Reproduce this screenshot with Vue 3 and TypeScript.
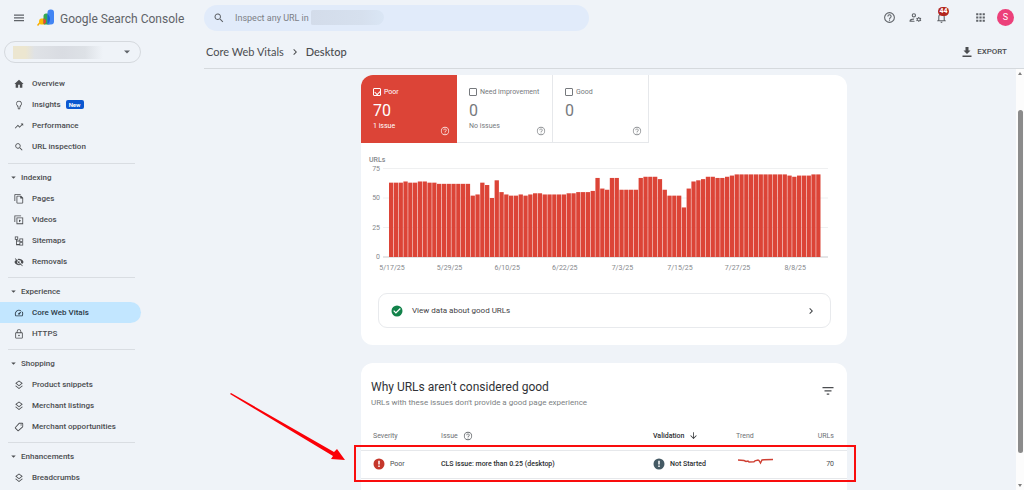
<script setup lang="ts">
import { ref } from 'vue'

interface NavItem {
  label: string
  icon: string
  isNew?: boolean
  active?: boolean
}
interface NavGroup {
  title?: string
  items: NavItem[]
}

const groups: NavGroup[] = [
  {
    items: [
      { label: 'Overview', icon: 'home' },
      { label: 'Insights', icon: 'bulb', isNew: true },
      { label: 'Performance', icon: 'trend' },
      { label: 'URL inspection', icon: 'search' },
    ],
  },
  {
    title: 'Indexing',
    items: [
      { label: 'Pages', icon: 'pages' },
      { label: 'Videos', icon: 'videos' },
      { label: 'Sitemaps', icon: 'sitemap' },
      { label: 'Removals', icon: 'hidden' },
    ],
  },
  {
    title: 'Experience',
    items: [
      { label: 'Core Web Vitals', icon: 'speed', active: true },
      { label: 'HTTPS', icon: 'lock' },
    ],
  },
  {
    title: 'Shopping',
    items: [
      { label: 'Product snippets', icon: 'layers' },
      { label: 'Merchant listings', icon: 'layers' },
      { label: 'Merchant opportunities', icon: 'tag' },
    ],
  },
  { title: 'Enhancements', items: [{ label: 'Breadcrumbs', icon: 'layers' }] },
]

const icons: Record<string, string> = {
  home: 'M10 21v-7h4v7h6v-9h3L12 2 1 12h3v9z',
  bulb: 'M9 21c0 .6.4 1 1 1h4c.6 0 1-.4 1-1v-1H9v1zm3-19a7 7 0 0 0-4 12.7V17c0 .6.4 1 1 1h6c.6 0 1-.4 1-1v-2.300A7 7 0 0 0 12 2zm2.800 11.100-.8.6V16h-4v-2.300l-.8-.6A5 5 0 1 1 14.800 13.100z',
  trend: 'm16 6 2.300 2.300-4.900 4.900-4-4L2 16.600 3.400 18l6-6 4 4 6.300-6.300L22 12V6z',
  search: 'M15.500 14h-.8l-.3-.3A6.500 6.500 0 1 0 13.700 14.400l.3.3v.8l5 5 1.500-1.500-5-5zm-6 0a4.500 4.500 0 1 1 0-9 4.500 4.500 0 0 1 0 9z',
  pages: 'M16 0H3C1.900 0 1 .9 1 2v15h2V2h13V0zm1 4H8C6.900 4 6 4.900 6 6v15c0 1.100.9 2 2 2h12c1.100 0 2-.9 2-2V9l-5-5zM8 21V6h7v5h5v10H8z',
  videos: 'M6 6v16h16V6H6zm2 2h12v12H8V8zm4 2.500v7l5-3.500zM1 1h2v16H1zM3 1h14v2H3z',
  sitemap: 'M2 1v8h3v13h8v1h9v-8h-9v4H7V13h6v1h9V6h-9v5H7V9h3V1H2zm2 2h4v4H4V3zm11 5h5v4h-5V8zm0 9h5v4h-5v-4z',
  hidden: 'M12 7a5 5 0 0 1 4.700 6.800l2.900 2.900A12 12 0 0 0 23 12a11.800 11.800 0 0 0-15-7l2.200 2.200A5 5 0 0 1 12 7zM2 4.300l2.700 2.700A11.800 11.800 0 0 0 1 12a11.800 11.800 0 0 0 15.400 6.700L19.700 22l1.300-1.300L3.300 3 2 4.300zM7.500 9.800l1.600 1.600a3 3 0 0 0 3.500 3.500l1.600 1.600A5 5 0 0 1 7.500 9.800zM11.800 9l3.200 3.200V12a3 3 0 0 0-3.200-3z',
  speed: 'm20.400 8.600-1.300 1.900A8 8 0 0 1 18.900 18H5.100A8 8 0 0 1 15.400 6.900l1.900-1.300A10 10 0 0 0 3.400 19c.3.600 1 1 1.700 1h13.800c.7 0 1.400-.4 1.700-1a10 10 0 0 0-.2-10.400zM10.600 15.400a2 2 0 0 0 2.800 0L19 7l-8.400 5.600a2 2 0 0 0 0 2.800z',
  lock: 'M19 8h-1.500V6a5.500 5.500 0 0 0-11 0v2H5c-1.100 0-2 .9-2 2v11c0 1.100.9 2 2 2h14c1.100 0 2-.9 2-2V10c0-1.100-.9-2-2-2zM8.500 6a3.500 3.500 0 0 1 7 0v2h-7V6zM19 21H5V10h14v11zm-7-3.500a2 2 0 1 0 0-4 2 2 0 0 0 0 4z',
  layers: 'M12 1 3 8l9 7 9-7-9-7zm0 2.600L17.700 8 12 12.400 6.300 8 12 3.600zM4.600 13.200 3 14.500l9 7 9-7-1.600-1.300L12 19l-7.400-5.800z',
  tag: 'M20 2h-7c-.6 0-1.100.2-1.500.6l-9 10a2 2 0 0 0 .1 2.800l6 6a2 2 0 0 0 2.800.1l10-9c.4-.4.6-.9.6-1.500V4c0-1.100-.9-2-2-2zm0 9-10 9-6-6 9-10h7v7zM17 5.500a1.500 1.500 0 1 0 0 3 1.500 1.500 0 0 0 0-3z',
  help: 'M11 18h2v-2h-2v2zm1-16a10 10 0 1 0 0 20 10 10 0 0 0 0-20zm0 18a8 8 0 1 1 0-16 8 8 0 0 1 0 16zm0-14a4 4 0 0 0-4 4h2a2 2 0 1 1 4 0c0 2-3 1.800-3 5h2c0-2.300 3-2.500 3-5a4 4 0 0 0-4-4z',
  people: 'M9 12a4 4 0 1 0 0-8 4 4 0 0 0 0 8zm0-6a2 2 0 1 1 0 4 2 2 0 0 1 0-4zM3 18c.2-.7 3-2 6-2l.7-2C6 13.700 1 15.300 1 18v2h9.500l-.9-2H3zm18.700-2-.1-1 1.100-1-1-1.700-1.500.5-.9-.5L19 11h-2l-.3 1.300-.9.5-1.500-.5-1 1.700 1.100 1v1l-1.100 1 1 1.700 1.500-.5.9.5L17 20h2l.3-1.300.9-.5 1.500.5 1-1.700-1-1zM18 17.300a1.800 1.800 0 1 1 0-3.600 1.800 1.800 0 0 1 0 3.600z',
  bell: 'M12 22a2 2 0 0 0 2-2h-4c0 1.100.9 2 2 2zm6-6v-5c0-3.100-1.600-5.600-4.500-6.300V4a1.500 1.500 0 0 0-3 0v.7C7.600 5.400 6 7.900 6 11v5l-2 2v1h16v-1l-2-2zm-2 1H8v-6c0-2.500 1.500-4.500 4-4.500s4 2 4 4.500v6z',
  apps: 'M4 4h4v4H4zm6 0h4v4h-4zm6 0h4v4h-4zM4 10h4v4H4zm6 0h4v4h-4zm6 0h4v4h-4zM4 16h4v4H4zm6 0h4v4h-4zm6 0h4v4h-4z',
  menu: 'M2 5h20v2.500H2zm0 5.500h20V13H2zM2 16h20v2.500H2z',
  download: 'M19 9h-4V2H9v7H5l7 7 7-7zM3 19v3h18v-3z',
  chevron: 'M8.600 16.600 13.200 12 8.600 7.400 10 6l6 6-6 6z',
  caret: 'M6 9h12l-6 6z',
  arrowDown: 'M11 3v14l-6-6-1.500 1.500L12 21l8.500-8.500L19 11l-6 6V3z',
  filter: 'M1 4h22v2.500H1zM5 10.500h14V13H5zM9.500 17h5v2.500h-5z',
  check: 'M12 1a11 11 0 1 0 0 22 11 11 0 0 0 0-22zm-2.200 16.500L4.500 12.200l1.700-1.700 3.600 3.600 8-8 1.700 1.700z',
  alert: 'M12 1a11 11 0 1 0 0 22 11 11 0 0 0 0-22zm1.500 17h-3v-3h3zm0-5h-3V5.500h3z',
}

const tabs = ref([
  { id: 'poor', label: 'Poor', count: 70, note: '1 issue', on: true },
  { id: 'need', label: 'Need improvement', count: 0, note: 'No issues', on: false },
  { id: 'good', label: 'Good', count: 0, note: '', on: false },
])

const values = [
  63, 63, 63, 64, 63, 63, 64, 64, 63, 63, 62, 62, 62, 62, 62, 62, 62, 52, 53, 63,
  61, 50, 65, 55, 53, 52, 52, 53, 52, 53, 54, 54, 53, 53, 53, 53, 53, 54, 54, 55,
  55, 55, 56, 67, 58, 57, 67, 67, 57, 57, 57, 57, 67, 68, 68, 68, 66, 57, 52, 52,
  52, 42, 58, 64, 65, 66, 68, 68, 67, 67, 68, 69, 70, 70, 70, 70, 70, 70, 70, 70,
  70, 70, 70, 69, 68, 69, 69, 69, 70, 70,
]
const dates = ['5/17/25', '5/29/25', '6/10/25', '6/22/25', '7/3/25', '7/15/25', '7/27/25', '8/8/25']
const ticks = [75, 50, 25, 0]

const base = 114
const step = 4.8
const yOf = (v: number): number => base - v * 1.18
const query = ref('')
</script>

<template>
  <div class="page">
    <header class="top">
      <div class="brand">
        <button class="plain" aria-label="Menu">
          <svg class="i12" viewBox="0 0 24 24"><path :d="icons.menu" /></svg>
        </button>
        <svg class="logo" viewBox="0 0 34 34" aria-hidden="true">
          <path d="M1 33l5-6" stroke="#f9ab00" stroke-width="3" />
          <path d="M4 25c0-4 2-6 5-6h7v12H8c-3 0-4-2-4-6z" fill="#fbbc04" />
          <path d="M13 14c0-3 2-5 5-5h7v22H16c-2 0-3-1-3-3z" fill="#34a853" />
          <path d="M13 19c3 0 5 3 5 6s-2 5-5 5z" fill="#ea4335" />
          <path d="M21 7c0-4 2-6 6-6h1c4 0 6 2 6 6v18c0 4-2 6-6 6h-7z" fill="#4285f4" />
          <path d="M21 10c3 2 5 6 5 10s-2 8-5 11z" fill="#1967d2" />
        </svg>
        <span class="name">Google Search Console</span>
      </div>
      <label class="search">
        <svg class="i12" viewBox="0 0 24 24"><path :d="icons.search" /></svg>
        <input v-model="query" type="text" placeholder="Inspect any URL in" aria-label="Inspect any URL" />
        <span class="smudge"></span>
      </label>
      <div class="tools">
        <button class="plain" aria-label="Help"><svg class="i13" viewBox="0 0 24 24"><path :d="icons.help" /></svg></button>
        <button class="plain" aria-label="Users"><svg class="i13" viewBox="0 0 24 24"><path :d="icons.people" /></svg></button>
        <button class="plain bell" aria-label="Notifications">
          <svg class="i13" viewBox="0 0 24 24"><path :d="icons.bell" /></svg>
          <span class="count">44</span>
        </button>
        <button class="plain apps" aria-label="Apps"><svg class="i13" viewBox="0 0 24 24"><path :d="icons.apps" /></svg></button>
        <button class="avatar">S</button>
      </div>
    </header>

    <aside class="side">
      <button class="site" aria-label="Select property">
        <span class="site-name"></span>
        <svg class="i12" viewBox="0 0 24 24"><path :d="icons.caret" /></svg>
      </button>
      <nav>
        <section v-for="(g, gi) in groups" :key="gi" class="group">
          <button v-if="g.title" class="group-title">
            <svg class="i9" viewBox="0 0 24 24"><path :d="icons.caret" /></svg>{{ g.title }}
          </button>
          <a v-for="n in g.items" :key="n.label" href="#" class="item" :class="{ active: n.active }">
            <svg class="i10" viewBox="0 0 24 24"><path :d="icons[n.icon]" fill-rule="evenodd" /></svg>
            <span>{{ n.label }}</span>
            <span v-if="n.isNew" class="new">New</span>
          </a>
        </section>
      </nav>
    </aside>

    <main class="main">
      <div class="bar">
        <nav class="crumbs">
          <a href="#">Core Web Vitals</a>
          <svg class="i12" viewBox="0 0 24 24"><path :d="icons.chevron" /></svg>
          <strong>Desktop</strong>
        </nav>
        <button class="plain export">
          <svg class="i12" viewBox="0 0 24 24"><path :d="icons.download" /></svg>EXPORT
        </button>
      </div>
      <div class="scroll">
        <div class="content">
          <section class="card">
            <div class="tabs">
              <div v-for="t in tabs" :key="t.id" class="tab" :class="{ on: t.id === 'poor' }">
                <label><input v-model="t.on" type="checkbox" />{{ t.label }}</label>
                <div class="num">{{ t.count }}</div>
                <div class="note">{{ t.note }}</div>
                <svg class="i10 tab-help" viewBox="0 0 24 24"><path :d="icons.help" /></svg>
              </div>
            </div>
            <svg class="chart" viewBox="0 0 486 140" role="img" aria-label="Poor URLs by day">
              <text x="8" y="19" class="axis-title">URLs</text>
              <g v-for="t in ticks" :key="t">
                <line x1="22" x2="467" :y1="yOf(t)" :y2="yOf(t)" :class="t ? 'grid' : 'zero'" />
                <text x="19" :y="yOf(t) + 2" text-anchor="end">{{ t }}</text>
              </g>
              <rect
                v-for="(v, i) in values"
                :key="i"
                :x="28 + i * step"
                :y="yOf(v)"
                width="4.300"
                :height="v * 1.18"
                class="bar-rect"
              />
              <text v-for="(d, i) in dates" :key="d" :x="31 + i * 12 * step" y="127" text-anchor="middle">{{ d }}</text>
            </svg>
            <a href="#" class="good-link">
              <svg class="i12 ok" viewBox="0 0 24 24"><path :d="icons.check" /></svg>
              <span>View data about good URLs</span>
              <svg class="i12" viewBox="0 0 24 24"><path :d="icons.chevron" /></svg>
            </a>
          </section>

          <section class="card issues">
            <div class="issues-head">
              <div>
                <h2>Why URLs aren't considered good</h2>
                <p>URLs with these issues don't provide a good page experience</p>
              </div>
              <button class="plain filter" aria-label="Filter"><svg class="i12" viewBox="0 0 24 24"><path :d="icons.filter" /></svg></button>
            </div>
            <table>
              <thead>
                <tr>
                  <th class="c-sev">Severity</th>
                  <th class="c-issue"><span class="cell">Issue <svg class="i10" viewBox="0 0 24 24"><path :d="icons.help" /></svg></span></th>
                  <th class="c-val"><span class="cell sorted">Validation <svg class="i9" viewBox="0 0 24 24"><path :d="icons.arrowDown" /></svg></span></th>
                  <th class="c-trend">Trend</th>
                  <th class="c-urls">URLs</th>
                </tr>
              </thead>
              <tbody>
                <tr>
                  <td class="c-sev"><span class="cell"><svg class="i12 bad" viewBox="0 0 24 24"><path :d="icons.alert" /></svg>Poor</span></td>
                  <td class="c-issue strong">CLS issue: more than 0.25 (desktop)</td>
                  <td class="c-val strong"><span class="cell"><svg class="i12 slate" viewBox="0 0 24 24"><path :d="icons.alert" /></svg>Not Started</span></td>
                  <td class="c-trend">
                    <svg class="spark" viewBox="0 0 36 8"><path d="M1 3l6 .5 2 1 2-.5 1 1 5-.2 1-1 3-.8 1 .5 1.500 2.500 1.500-3 2-.3 9-.2" /></svg>
                  </td>
                  <td class="c-urls">70</td>
                </tr>
              </tbody>
            </table>
            <div class="frame"></div>
            <svg class="pointer" viewBox="0 0 116 70" aria-hidden="true">
              <path d="M1 0L104 59 107 56 115 67 101 66 103 63 0 1Z" />
            </svg>
          </section>
        </div>
        <div class="track">
          <span class="up"></span>
          <span class="thumb"></span>
          <span class="down"></span>
        </div>
      </div>
    </main>
  </div>
</template>

<style>
body {
  background: #eff3f8;
}
</style>

<style scoped>
.page {
  display: grid;
  grid-template: 35px 1fr / 192px 1fr;
  height: 100vh;
  overflow: hidden;
  background: #eff3f8;
  color: #4b4d50;
  font: 8px/10px Roboto, "Liberation Sans", sans-serif;
}
* {
  box-sizing: border-box;
}
svg {
  fill: currentColor;
  flex: none;
}
button {
  font: inherit;
  color: inherit;
  border: 0;
  background: none;
  padding: 0;
}
a {
  color: inherit;
  text-decoration: none;
}
.plain {
  display: flex;
  align-items: center;
}
.i9 { width: 9px; height: 9px; }
.i10 { width: 10px; height: 10px; }
.i12 { width: 12px; height: 12px; }
.i13 { width: 13px; height: 13px; }

.top {
  grid-column: 1 / 3;
  display: flex;
  align-items: center;
  color: #5f6368;
}
.brand {
  width: 204px;
  flex: none;
  display: flex;
  align-items: center;
  padding-left: 13px;
}
.logo {
  width: 17px;
  height: 17px;
  margin: 0 6px 0 12px;
}
.name {
  font: 12px/16px Roboto, sans-serif;
  padding-top: 3px;
  white-space: nowrap;
}
.search {
  height: 26px;
  flex: 0 1 385px;
  display: flex;
  align-items: center;
  padding-left: 9px;
  border-radius: 13px;
  background: #e1ebfa;
}
.search input {
  width: 76px;
  margin-left: 10px;
  padding: 0;
  border: 0;
  outline: 0;
  background: none;
  font: 9px/12px Roboto, sans-serif;
  color: #47494c;
}
.search input::placeholder {
  color: #7c8086;
  opacity: 1;
}
.smudge {
  width: 73px;
  height: 15px;
  border-radius: 2px 8px 8px 2px;
  background: linear-gradient(90deg, #d3dcea, #d6e0ee 70%, #dae6f5);
}
.tools {
  margin-left: auto;
  display: flex;
  align-items: center;
  padding-right: 10px;
  gap: 13px;
}
.bell {
  position: relative;
}
.count {
  position: absolute;
  left: 3px;
  top: -4px;
  width: 11px;
  height: 9px;
  border-radius: 5px;
  background: #b3261e;
  color: #fff;
  font: 700 7px/9px Roboto, sans-serif;
  text-align: center;
}
.apps {
  margin-left: 13px;
}
.avatar {
  width: 17px;
  height: 17px;
  margin-left: -3px;
  border-radius: 50%;
  background: #ec407a;
  color: #fff;
  font: 9px/17px Roboto, sans-serif;
}

.side {
  padding-top: 6px;
  overflow: hidden;
}
.site {
  display: flex;
  align-items: center;
  justify-content: space-between;
  width: 137px;
  height: 22px;
  margin: 0 0 10px 4px;
  padding: 0 7px 0 8px;
  border: 1px solid #d5d9de;
  border-radius: 11px;
  color: #5f6368;
}
.site-name {
  width: 90px;
  height: 13px;
  background: linear-gradient(90deg, #ece6d0 0 14%, #dfe2e6 24%, #d9dce2 55%, #dde1e6 80%, #eff3f8);
}
.group {
  width: 141px;
}
.group:first-child {
  padding-bottom: 1px;
}
.group + .group::before {
  content: "";
  display: block;
  height: 1px;
  margin: 5px 6px 3px 8px;
  background: #d9dde2;
}
.group-title {
  display: flex;
  align-items: center;
  height: 21px;
  padding-left: 9px;
  gap: 3px;
  font-weight: 500;
}
.item {
  display: flex;
  align-items: center;
  height: 21px;
  padding-left: 14px;
  gap: 8px;
  font-weight: 500;
  border-radius: 0 11px 11px 0;
}
.item.active {
  background: #c2e6ff;
  color: #2b3a47;
}
.new {
  margin-left: -3px;
  padding: 0 3px;
  border-radius: 2px;
  background: #0b57d0;
  color: #fff;
  font: 700 6px/9px Roboto, sans-serif;
}

.main {
  display: flex;
  flex-direction: column;
  min-width: 0;
  min-height: 0;
}
.bar {
  display: flex;
  justify-content: space-between;
  align-items: center;
  height: 34px;
  margin-left: 12px;
  padding: 0 17px 0 2px;
  border-bottom: 1px solid #d5d9dd;
}
.crumbs {
  display: flex;
  align-items: center;
  gap: 5px;
  font: 11px/14px Lato, Roboto, sans-serif;
}
.crumbs strong {
  font-weight: 500;
}
.export {
  gap: 4px;
  font-weight: 500;
}
.scroll {
  flex: 1;
  display: flex;
  min-height: 0;
}
.content {
  flex: 1;
  overflow: hidden;
  padding-top: 6px;
}
.card {
  position: relative;
  max-width: 486px;
  margin: 0 auto 18px;
  border-radius: 12px;
  background: #fff;
}
.tabs {
  display: flex;
  font-size: 7px;
  color: #76797d;
}
.tab {
  position: relative;
  width: 96px;
  height: 68px;
  padding: 12px 0 0 12px;
  border-right: 1px solid #e6e8eb;
  border-bottom: 1px solid #e6e8eb;
}
.tab:first-child {
  border-radius: 12px 0 0 0;
}
.tab.on {
  background: #dc4437;
  border-color: #dc4437;
  color: #fff;
}
.tab label {
  display: flex;
  align-items: center;
  gap: 3px;
  height: 10px;
  white-space: nowrap;
}
.tab input {
  appearance: none;
  position: relative;
  width: 8px;
  height: 8px;
  margin: 0;
  color: inherit;
  border: 1px solid currentColor;
  border-radius: 1px;
}
.tab input:checked::after {
  content: "";
  position: absolute;
  left: 1px;
  top: 1px;
  width: 4px;
  height: 3px;
  border: solid currentColor;
  border-width: 0 0 1px 1px;
  transform: rotate(-45deg);
}
.num {
  margin-top: 4px;
  font-size: 16px;
  line-height: 20px;
}
.tab-help {
  position: absolute;
  right: 6px;
  bottom: 6px;
  opacity: 0.8;
}
.chart {
  display: block;
  width: 100%;
}
.chart text {
  fill: #85888c;
  font-size: 7px;
}
.chart .axis-title {
  font-weight: 500;
}
.grid { stroke: #eff0f1; }
.zero { stroke: #c9cbce; }
.bar-rect { fill: #dc4437; }
.good-link {
  display: flex;
  align-items: center;
  height: 35px;
  margin: 10px 16px 0 17px;
  padding: 0 13px 0 12px;
  border: 1px solid #e8eaed;
  border-radius: 9px;
  color: #3f4245;
}
.good-link span {
  flex: 1;
  margin-left: 9px;
}
.card:first-child {
  padding-bottom: 17px;
}
.ok { color: #12824a; }
.bad { color: #c5372b; }
.slate { color: #455a64; }

.issues {
  height: 180px;
}
.issues-head {
  display: flex;
  justify-content: space-between;
  align-items: flex-start;
  padding: 16px 13px 0 10px;
}
.filter {
  margin-top: 6px;
}
h2 {
  margin: 0;
  font: 12px/16px Roboto, sans-serif;
  color: #303236;
}
p {
  margin: 3px 0 0;
  font-size: 8px;
  line-height: 10px;
  color: #7c7f83;
}
table {
  width: 100%;
  margin-top: 14px;
  border-collapse: collapse;
  table-layout: fixed;
}
th,
td {
  height: 28px;
  padding: 0;
  text-align: left;
  border-bottom: 1px solid #e6e8eb;
  white-space: nowrap;
}
th {
  font-weight: 400;
  font-size: 7px;
  color: #6d7074;
}
.cell {
  display: flex;
  align-items: center;
  gap: 5px;
}
.strong,
.sorted {
  font-weight: 500;
  color: #2c2e31;
}
td {
  font-size: 7px;
}
.c-sev { width: 80px; padding-left: 12px; }
.c-val { width: 83px; }
.c-trend { width: 56px; }
.c-urls { width: 55px; padding-right: 13px; text-align: right; }
.spark {
  display: block;
  width: 36px;
  height: 8px;
  margin: 0 0 7px 1px;
  fill: none;
  stroke: #cf4034;
  stroke-width: 1.4;
}
.frame {
  position: absolute;
  left: -7px;
  right: -9px;
  top: 82px;
  height: 37px;
  border: 2px solid #f90d0d;
}
.pointer {
  position: absolute;
  left: -131px;
  top: 30px;
  width: 116px;
  height: 70px;
  fill: #fb0007;
}
.track {
  display: flex;
  flex-direction: column;
  align-items: center;
  width: 8px;
  padding: 3px 0;
  background: #fcfcfc;
}
.up,
.down {
  border: solid transparent;
  border-width: 0 2px;
}
.up { border-bottom: 3px solid #7e7e7e; }
.down { border-top: 3px solid #7e7e7e; }
.thumb {
  width: 5px;
  flex: 1;
  margin: 35px 0 31px;
  border-radius: 3px;
  background: #8b8b8b;
}
</style>
